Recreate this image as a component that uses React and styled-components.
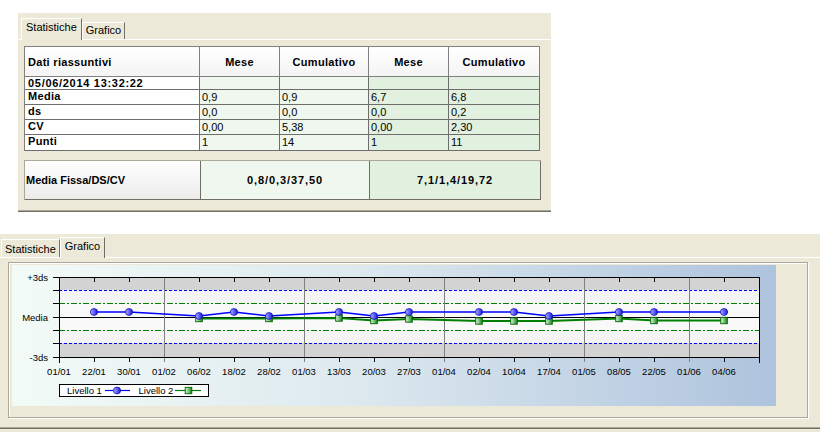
import styled, { createGlobalStyle } from 'styled-components';

// Windows XP-ish look: beige dialog panels, a grid of results and a control chart
const GlobalStyle = createGlobalStyle`
  html, body {
    margin: 0;
    padding: 0;
    background: #ffffff;
  }
  body {
    font-family: "Liberation Sans", Arial, sans-serif;
    font-size: 11px;
    color: #000;
  }
`;

const Page = styled.div`
  width: 820px;
  height: 432px;
  overflow: hidden;
  display: flex;
  flex-direction: column;
  align-items: flex-start;
`;

const Panel = styled.section`
  box-sizing: border-box;
  flex-shrink: 0;
  width: ${(p) => p.$width}px;
  height: ${(p) => p.$height}px;
  margin: ${(p) => p.$top}px 0 0 ${(p) => p.$left}px;
  padding: ${(p) => p.$padTop}px 0 ${(p) => p.$padBottom}px;
  background: #ece9d8;
  display: flex;
  flex-direction: column;
`;

const TabStrip = styled.div`
  display: flex;
  align-items: flex-end;
  height: ${(p) => p.$height}px;
  padding-left: ${(p) => p.$indent}px;
  position: relative;
  z-index: 1;
`;

const Tab = styled.div`
  box-sizing: border-box;
  height: ${(p) => (p.$active ? p.$strip + 1 : p.$strip - p.$drop)}px;
  margin-bottom: ${(p) => (p.$active ? -1 : 0)}px;
  padding: ${(p) => p.$pad}px ${(p) => (p.$active ? 4 : 3)}px 0;
  background: #ece9d8;
  border: 1px solid;
  border-color: #ffffff #716f64 transparent #ffffff;
  border-bottom: none;
  line-height: 13px;
  white-space: nowrap;
`;

const TabBody = styled.div`
  flex: 1;
  box-sizing: border-box;
  border-top: 1px solid #ffffff;
  border-bottom: 1px solid #aca899;
  box-shadow: 0 1px 0 #716f64;
  padding: ${(p) => p.$pad};
  display: flex;
  flex-direction: column;
  align-items: flex-start;
  gap: ${(p) => p.$gap || 0}px;
`;

/* ---------- Statistiche ---------- */

const DataGrid = styled.div`
  display: grid;
  grid-template-columns: 175px 80px 89px 80px 91px;
  grid-template-rows: 30px 13px 15px 15px 15px 16px;
  border-top: 1px solid #808080;
  border-left: 1px solid #808080;
`;

const tones = {
  plain: '#ffffff',
  light: '#f0f7ef',
  mid: '#e2f1df',
};

const HeadCell = styled.div`
  box-sizing: border-box;
  display: flex;
  align-items: center;
  justify-content: ${(p) => (p.$left ? 'flex-start' : 'center')};
  padding-left: ${(p) => (p.$left ? 3 : 0)}px;
  background: linear-gradient(#ffffff, #f4f4f4);
  border-right: 1px solid #808080;
  border-bottom: 1px solid #808080;
  font-weight: bold;
  letter-spacing: 0.3px;
`;

const LabelCell = styled.div`
  box-sizing: border-box;
  padding-left: 3px;
  line-height: 13px;
  background: #ffffff;
  border-right: 1px solid #6e6e6e;
  border-bottom: 1px solid #6e6e6e;
  font-weight: bold;
  letter-spacing: ${(p) => (p.$numeric ? 0.7 : 0.3)}px;
  white-space: nowrap;
`;

const ValueCell = styled.div`
  box-sizing: border-box;
  padding-left: 2px;
  line-height: 14px;
  background: ${(p) => tones[p.$tone]};
  border-right: 1px solid #6e6e6e;
  border-bottom: 1px solid #6e6e6e;
`;

const SummaryGrid = styled.div`
  display: grid;
  grid-template-columns: 176px 169px 171px;
  height: 40px;
  box-sizing: border-box;
  border-top: 1px solid #aca899;
  border-left: 1px solid #aca899;
`;

const SummaryCell = styled.div`
  box-sizing: border-box;
  display: flex;
  align-items: center;
  justify-content: ${(p) => (p.$left ? 'flex-start' : 'center')};
  padding-left: ${(p) => (p.$left ? 1 : 0)}px;
  background: ${(p) => (p.$tone === 'plain' ? 'linear-gradient(#ffffff, #ebebeb)' : tones[p.$tone])};
  border-right: 1px solid #716f64;
  border-bottom: 1px solid #716f64;
  font-weight: bold;
  letter-spacing: ${(p) => (p.$left ? 0 : 0.9)}px;
`;

/* ---------- Grafico ---------- */

const ChartFrame = styled.div`
  box-sizing: border-box;
  width: 800px;
  height: 156px;
  border: 1px solid #aca899;
  box-shadow: inset 1px 1px 0 #ffffff, 1px 1px 0 #ffffff;
  padding: 2px 0 0 3px;
`;

const ChartCanvas = styled.div`
  width: 764px;
  height: 141px;
  background: linear-gradient(to right, #f3fbf7 0%, #dde9ef 45%, #aec3dd 100%);
`;

const ChartSvg = styled.svg`
  display: block;
  font-family: "Liberation Sans", Arial, sans-serif;
  font-size: 9.5px;
`;

const headers = ['Dati riassuntivi', 'Mese', 'Cumulativo', 'Mese', 'Cumulativo'];
const colTones = ['light', 'light', 'mid', 'mid'];

const rows = [
  { label: '05/06/2014 13:32:22', numeric: true, values: ['', '', '', ''] },
  { label: 'Media', values: ['0,9', '0,9', '6,7', '6,8'] },
  { label: 'ds', values: ['0,0', '0,0', '0,0', '0,2'] },
  { label: 'CV', values: ['0,00', '5,38', '0,00', '2,30'] },
  { label: 'Punti', values: ['1', '14', '1', '11'] },
];

const dates = [
  '01/01', '22/01', '30/01', '01/02', '06/02', '18/02', '28/02', '01/03', '13/03', '20/03',
  '27/03', '01/04', '02/04', '10/04', '17/04', '01/05', '08/05', '22/05', '01/06', '04/06',
];
const monthMarks = [3, 7, 11, 15, 18];

const level1 = [
  [1, 47], [2, 47], [4, 51], [5, 47], [6, 51], [8, 47], [9, 51], [10, 47],
  [12, 47], [13, 47], [14, 51], [16, 47], [17, 47], [19, 47],
];
const level2 = [
  [4, 53.5], [6, 53.5], [8, 53], [9, 55.5], [10, 54], [12, 56], [13, 56],
  [14, 56], [16, 53.5], [17, 55.5], [19, 55.5],
];

// limit lines: y, colour, dash pattern
const limits = [
  [25.5, '#0000ff', '3 2'],
  [78.5, '#0000ff', '3 2'],
  [38.5, '#008000', '6 2 2 2'],
  [65.5, '#008000', '6 2 2 2'],
];

const PL = 47;
const PT = 12;
const PB = 92;
const STEP = 35;
const PR = PL + STEP * 20;
const X = (i) => PL + STEP * i;

function Tabs({ labels, active, strip, indent, drop, pads }) {
  return (
    <TabStrip $height={strip} $indent={indent}>
      {labels.map((l, i) => (
        <Tab
          key={l}
          $active={i === active}
          $strip={strip}
          $drop={drop}
          $pad={i === active ? pads[0] : pads[1]}
        >
          {l}
        </Tab>
      ))}
    </TabStrip>
  );
}

function Circle({ x, y }) {
  return <ellipse cx={x} cy={y} rx={3.6} ry={3.4} fill="url(#blueDot)" stroke="#1010b0" strokeWidth="0.8" />;
}

function Square({ x, y }) {
  return <rect x={x - 3.3} y={y - 3.2} width={6.6} height={6.4} fill="url(#greenBox)" stroke="#006000" strokeWidth="0.9" />;
}

function ControlChart() {
  const levels = [12, 25, 38, 52, 65, 78, 92];
  const pts = (s) => s.map(([i, y]) => `${X(i)},${y}`).join(' ');
  return (
    <ChartSvg width="764" height="141" viewBox="0 0 764 141">
      <defs>
        <linearGradient id="blueDot" x1="0" x2="1" y1="0" y2="0">
          <stop offset="0" stopColor="#b4b4ff" />
          <stop offset="0.55" stopColor="#5a5aff" />
          <stop offset="1" stopColor="#1818d0" />
        </linearGradient>
        <linearGradient id="greenBox" x1="0" x2="1" y1="0" y2="0">
          <stop offset="0" stopColor="#e8f5e8" />
          <stop offset="0.5" stopColor="#7cc27c" />
          <stop offset="1" stopColor="#108a10" />
        </linearGradient>
      </defs>

      <g shapeRendering="crispEdges">
        <rect x={PL} y={12} width={PR - PL} height={13} fill="#d3d3d3" />
        <rect x={PL} y={25} width={PR - PL} height={13} fill="#f4f4f4" />
        <rect x={PL} y={38} width={PR - PL} height={27} fill="#f9f9f9" />
        <rect x={PL} y={65} width={PR - PL} height={13} fill="#f4f4f4" />
        <rect x={PL} y={78} width={PR - PL} height={14} fill="#d3d3d3" />
      </g>

      {limits.map(([y, color, dash]) => (
        <line key={y} x1={PL} x2={PR} y1={y} y2={y} stroke={color} strokeWidth="1" strokeDasharray={dash} />
      ))}
      <line x1={PL} x2={PR} y1={52.5} y2={52.5} stroke="#000000" />

      <g shapeRendering="crispEdges">
        {monthMarks.map((i) => (
          <line key={i} x1={X(i) + 0.5} x2={X(i) + 0.5} y1={PT} y2={PB + 5} stroke="#808080" />
        ))}
        {dates.map((d, i) =>
          i === 0 || monthMarks.includes(i) ? null : (
            <g key={d}>
              <line x1={X(i) + 0.5} x2={X(i) + 0.5} y1={PT} y2={PT + 5} stroke="#000" />
              <line x1={X(i) + 0.5} x2={X(i) + 0.5} y1={PB} y2={PB + 5} stroke="#000" />
            </g>
          )
        )}
        {levels.map((y) => (
          <line key={y} x1={PL - 6} x2={PL} y1={y + 0.5} y2={y + 0.5} stroke="#000" />
        ))}
        <line x1={PL} x2={PR + 1} y1={PT + 0.5} y2={PT + 0.5} stroke="#000" />
        <line x1={PL} x2={PR + 1} y1={PB + 0.5} y2={PB + 0.5} stroke="#000" />
        <line x1={PL + 0.5} x2={PL + 0.5} y1={PT} y2={PB + 6} stroke="#000" />
        <line x1={PR + 0.5} x2={PR + 0.5} y1={PT} y2={PB + 6} stroke="#000" />
      </g>

      <text x={36} y={15.5} textAnchor="end">+3ds</text>
      <text x={36} y={55.5} textAnchor="end">Media</text>
      <text x={36} y={95.5} textAnchor="end">-3ds</text>

      {dates.map((d, i) => (
        <text key={d} x={X(i)} y={109.5} textAnchor="middle">{d}</text>
      ))}

      <polyline points={pts(level2)} fill="none" stroke="#008000" strokeWidth="1.8" />
      <polyline points={pts(level1)} fill="none" stroke="#0000ff" strokeWidth="1.6" />
      {level2.map(([i, y]) => (
        <Square key={i} x={X(i)} y={y} />
      ))}
      {level1.map(([i, y]) => (
        <Circle key={i} x={X(i)} y={y} />
      ))}

      <rect x={47.5} y={119.5} width={149} height={12} fill="#ffffff" stroke="#000" shapeRendering="crispEdges" />
      <text x={55} y={129}>Livello 1</text>
      <line x1={93} x2={118} y1={125.5} y2={125.5} stroke="#0000ff" strokeWidth="1.2" />
      <Circle x={105} y={125.5} />
      <text x={126.5} y={129}>Livello 2</text>
      <line x1={163} x2={189} y1={125.5} y2={125.5} stroke="#008000" strokeWidth="1.2" />
      <Square x={176.5} y={125.5} />
    </ChartSvg>
  );
}

export default function App() {
  return (
    <Page>
      <GlobalStyle />

      <Panel $width={533} $height={198} $top={13} $left={18} $padTop={5} $padBottom={0}>
        <Tabs labels={['Statistiche', 'Grafico']} active={0} strip={21} indent={3} drop={4} pads={[2, 1]} />
        <TabBody $pad="6px 0 0 6px" $gap={9}>
          <DataGrid>
            {headers.map((h, i) => (
              <HeadCell key={i} $left={i === 0}>{h}</HeadCell>
            ))}
            {rows.map((r) => [
              <LabelCell key={r.label} $numeric={r.numeric}>{r.label}</LabelCell>,
              ...r.values.map((v, c) => (
                <ValueCell key={r.label + c} $tone={colTones[c]}>{v}</ValueCell>
              )),
            ])}
          </DataGrid>
          <SummaryGrid>
            <SummaryCell $left $tone="plain">Media Fissa/DS/CV</SummaryCell>
            <SummaryCell $tone="light">0,8/0,3/37,50</SummaryCell>
            <SummaryCell $tone="mid">7,1/1,4/19,72</SummaryCell>
          </SummaryGrid>
        </TabBody>
      </Panel>

      <Panel $width={820} $height={198} $top={23} $left={0} $padTop={3} $padBottom={4}>
        <Tabs labels={['Statistiche', 'Grafico']} active={1} strip={20} indent={1} drop={2} pads={[2, 3]} />
        <TabBody $pad="4px 0 0 8px">
          <ChartFrame>
            <ChartCanvas>
              <ControlChart />
            </ChartCanvas>
          </ChartFrame>
        </TabBody>
      </Panel>
    </Page>
  );
}
